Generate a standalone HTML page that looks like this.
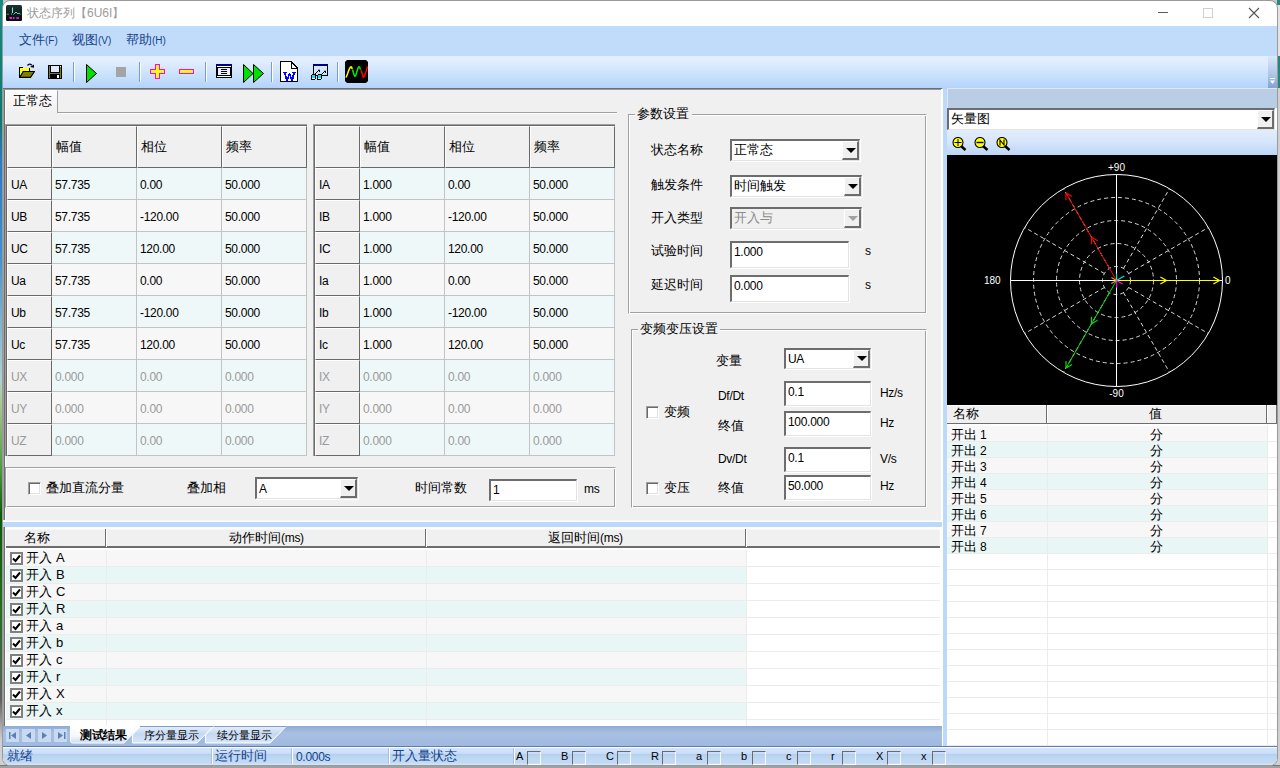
<!DOCTYPE html><html><head><meta charset="utf-8"><style>
*{margin:0;padding:0;box-sizing:border-box}
html,body{width:1280px;height:768px;overflow:hidden;background:#c8c8c8;font-family:"Liberation Sans",sans-serif;font-size:12px;color:#000}
.abs{position:absolute}
.t{position:absolute;white-space:nowrap;height:0;line-height:0}
.t>span,.tc{display:inline-block}
.cj{font-size:13px}
.num{font-size:12px;letter-spacing:-0.3px}
.sunk{position:absolute;background:#fff;border-top:2px solid #6d6d6d;border-left:2px solid #6d6d6d;border-right:1px solid #e3e3e3;border-bottom:1px solid #e3e3e3;box-shadow:1px 1px 0 #fff}
.btn{position:absolute;background:#f0f0f0;border-top:1px solid #fff;border-left:1px solid #fff;border-right:2px solid #6d6d6d;border-bottom:2px solid #6d6d6d}
.arr{position:absolute;width:0;height:0;border-left:5px solid transparent;border-right:5px solid transparent;border-top:5px solid #000}
.chk{position:absolute;width:13px;height:13px;background:#fff;border-top:1px solid #a0a0a0;border-left:1px solid #a0a0a0;border-right:1px solid #fff;border-bottom:1px solid #fff;box-shadow:inset 1px 1px 0 #696969, inset -1px -1px 0 #e3e3e3}
</style></head><body>
<div class="abs" style="left:0px;top:0px;width:3px;height:768px;background:linear-gradient(#1a8a80 0,#0a7a70 120px,#2a7ac8 160px,#3a90d0 250px,#b0d0d0 380px,#a8c890 404px,#4a9a40 470px,#0a5a0a 515px,#207020 611px,#606060 700px,#d0d0d0 740px)"></div>
<div class="abs" style="left:1277px;top:0px;width:3px;height:768px;background:linear-gradient(#2a8a80 0,#2a8a80 5px,#e4e4e4 5px,#e4e4e4 56px,#23877e 56px,#23877e 88px,#d0d0d0 88px,#d0d0d0 100%)"></div>
<div class="abs" style="left:0px;top:765px;width:1280px;height:3px;background:linear-gradient(#7a7a7a 0,#7a7a7a 1px,#a0a0a0 1px)"></div>
<div class="abs" style="left:2px;top:0px;width:1276px;height:766px;background:#fff;border-radius:8px;border:1px solid #9a9a9a"></div>
<svg class="abs" style="left:6px;top:5px" width="16" height="16" viewBox="0 0 16 16"><defs><linearGradient id="ig" x1="0" y1="0" x2="0" y2="1"><stop offset="0" stop-color="#1e3430"/><stop offset="1" stop-color="#020806"/></linearGradient></defs><rect x="0" y="0" width="16" height="16" rx="1.5" fill="url(#ig)"/><path d="M0.5 9.2 H3" stroke="#3a9a88" stroke-width="1"/><path d="M6.5 2.5 V8" stroke="#7ee8d8" stroke-width="1.1"/><path d="M5 9 h1 M7.5 9.5 L10 7 L12 9 L13 8 L14.5 9.2" stroke="#5ad0bc" stroke-width="1" fill="none"/><path d="M3 12 H6 V14 H4Z M7 12 H8.5 V14 H7Z M10 12.3 H13 V14 H10.5Z" fill="#ff10f0"/></svg>
<div class="t" style="left:27px;top:13px;"><span class="cj" style="font-size:12px;color:#9c9c9c">状态序列【6U6I】</span></div>
<div class="abs" style="left:1158px;top:12px;width:10px;height:1px;background:#5a5a5a"></div>
<div class="abs" style="left:1203px;top:8px;width:10px;height:10px;border:1px solid #d0d0d0"></div>
<svg class="abs" style="left:1248px;top:7px" width="12" height="12"><path d="M1 1 L11 11 M11 1 L1 11" stroke="#555" stroke-width="1.1"/></svg>
<div class="abs" style="left:3px;top:26px;width:1274px;height:30px;background:#c1dbfa"></div>
<div class="t" style="left:19px;top:40px;"><span class="cj" style="color:#15428b">文件</span><span style="font-size:10px;color:#15428b">(F)</span></div>
<div class="t" style="left:72px;top:40px;"><span class="cj" style="color:#15428b">视图</span><span style="font-size:10px;color:#15428b">(V)</span></div>
<div class="t" style="left:126px;top:40px;"><span class="cj" style="color:#15428b">帮助</span><span style="font-size:10px;color:#15428b">(H)</span></div>
<div class="abs" style="left:3px;top:56px;width:1274px;height:33px;background:linear-gradient(#e3eefd 0%,#e1edfd 18%,#c8e0fc 60%,#b2d2fc 100%)"></div>
<div class="abs" style="left:1268px;top:56px;width:9px;height:33px;background:linear-gradient(#dbe8f8,#a9c4e8 60%,#7d9fd4)"></div>
<svg class="abs" style="left:1269px;top:77px" width="8" height="8"><path d="M1 1.5 H6" stroke="#fff"/><path d="M1 3.5 L6 3.5 L3.5 7Z" fill="#fff"/></svg>
<div class="abs" style="left:3px;top:88px;width:939px;height:1px;background:#6d6d6d"></div>
<div class="abs" style="left:3px;top:89px;width:939px;height:1px;background:#9a9a9a"></div>
<div class="abs" style="left:73px;top:62px;width:1px;height:20px;background:#7a9cd0;box-shadow:1px 0 0 #fff"></div>
<div class="abs" style="left:139px;top:62px;width:1px;height:20px;background:#7a9cd0;box-shadow:1px 0 0 #fff"></div>
<div class="abs" style="left:205px;top:62px;width:1px;height:20px;background:#7a9cd0;box-shadow:1px 0 0 #fff"></div>
<div class="abs" style="left:271px;top:62px;width:1px;height:20px;background:#7a9cd0;box-shadow:1px 0 0 #fff"></div>
<div class="abs" style="left:337px;top:62px;width:1px;height:20px;background:#7a9cd0;box-shadow:1px 0 0 #fff"></div>
<svg class="abs" style="left:19px;top:63px" width="16" height="15" viewBox="0 0 16 15">
<path d="M0 4 H4 V5 H11 V8.5 H0Z" fill="#000"/>
<path d="M1 5 H10 V8 H4 L1 12Z" fill="#ffff20"/>
<path d="M0 4 H1 V15 H0Z" fill="#000"/>
<path d="M0.8 14.3 L4.2 8.5 H15.5 L11.5 14.3Z" fill="#808000" stroke="#000" stroke-width="1.2"/>
<path d="M8.5 2.5 Q10.5 0 12.8 2.2" stroke="#000" stroke-width="1.3" fill="none"/>
<path d="M11 4 L15 1.5 V4.8Z" fill="#000"/>
</svg>
<svg class="abs" style="left:48px;top:65px" width="14" height="14" viewBox="0 0 14 14" shape-rendering="crispEdges">
<rect x="0" y="0" width="14" height="14" fill="#000"/>
<rect x="1" y="1" width="1" height="12" fill="#808000"/>
<rect x="12" y="1" width="1" height="12" fill="#808000"/>
<rect x="1" y="8" width="12" height="1" fill="#808000"/>
<rect x="3" y="1" width="8" height="6" fill="#e0ebfc"/>
<rect x="9" y="10" width="2" height="3" fill="#fff"/>
<rect x="12" y="1" width="1" height="1" fill="#fff"/>
</svg>
<svg class="abs" style="left:86px;top:64px" width="11" height="19"><path d="M0.5 0.5 L10.5 9.5 L0.5 18.5 Z" fill="#00e000" stroke="#000"/></svg>
<div class="abs" style="left:116px;top:67px;width:10px;height:10px;background:#a4a4a4"></div>
<svg class="abs" style="left:150px;top:64px" width="15" height="15" shape-rendering="crispEdges"><path d="M5 0 H10 V5 H15 V10 H10 V15 H5 V10 H0 V5 H5 Z" fill="#ff00ff"/><path d="M6 1 H9 V6 H14 V9 H9 V14 H6 V9 H1 V6 H6 Z" fill="#ffff00"/></svg>
<div class="abs" style="left:179px;top:69px;width:15px;height:5px;background:#ffff00;border:1px solid #ff00ff"></div>
<svg class="abs" style="left:216px;top:64px" width="16" height="14" shape-rendering="crispEdges"><rect x="0" y="0" width="16" height="14" fill="#000"/><rect x="0" y="0" width="16" height="2" fill="#000080"/><rect x="1" y="2" width="14" height="1" fill="#fff"/><rect x="2" y="4" width="12" height="7" fill="#e6effc"/><rect x="1" y="12" width="14" height="1" fill="#fff"/><rect x="5" y="5" width="6" height="1" fill="#000"/><rect x="5" y="7" width="6" height="1" fill="#000"/><rect x="5" y="9" width="6" height="1" fill="#000"/></svg>
<svg class="abs" style="left:243px;top:64px" width="21" height="19"><path d="M0.5 0.5 L10 9.5 L0.5 18.5 Z M10.5 0.5 L20.5 9.5 L10.5 18.5 Z" fill="#00e000" stroke="#000"/></svg>
<svg class="abs" style="left:280px;top:61px" width="18" height="21" shape-rendering="crispEdges"><path d="M0.5 0.5 H11 L17.5 7 V20.5 H0.5 Z" fill="#fff" stroke="#000"/><path d="M11.5 0.5 V7.5 H17.5" fill="none" stroke="#000"/><path d="M3 11 H7 V12 H6 L7 17 L9 12 H10 L12 17 L13 12 H12 V11 H16 V12 H15 L13 20 H11 L9.5 15 L8 20 H6 L4 12 H3 Z" fill="#0000ff"/></svg>
<svg class="abs" style="left:310px;top:64px" width="18" height="16" shape-rendering="crispEdges"><rect x="3" y="0" width="15" height="2" fill="#000080"/><rect x="3" y="2" width="1" height="10" fill="#000"/><rect x="17" y="2" width="1" height="10" fill="#000"/><rect x="3" y="11" width="15" height="1" fill="#000"/><path d="M4 11 L9 6 M8.5 6 H9.5 V8 M11 11 L15 7 M14.5 7 H15.5 V9" stroke="#000" fill="none" shape-rendering="auto"/><rect x="1" y="10" width="5" height="6" rx="2" fill="#000"/><rect x="7" y="10" width="5" height="6" rx="2" fill="#000"/><rect x="5" y="11" width="3" height="1" fill="#000"/><rect x="2" y="11" width="3" height="3" fill="#00e8f0"/><rect x="8" y="11" width="3" height="3" fill="#00e8f0"/><rect x="2" y="14" width="3" height="1" fill="#fff"/><rect x="8" y="14" width="3" height="1" fill="#fff"/></svg>
<svg class="abs" style="left:345px;top:60px" width="23" height="23"><path d="M2 0 H21 L23 2 V21 L21 23 H2 L0 21 V2Z" fill="#000"/><path d="M1 17.5 L2.5 14 L3.5 11 L4.5 8.5 L5.5 7 L6.5 7 L7.2 9" stroke="#ffff00" stroke-width="1.5" fill="none"/><path d="M7.5 9.5 L8.5 13 L9.5 16 L10.5 16 L11.5 13 L12.5 9.5 L13.5 7 L14.5 7 L15.5 9.5" stroke="#00ee00" stroke-width="1.5" fill="none"/><path d="M16 10 L17.3 14 L18.3 17.3 L19.5 16 L20.5 13 L21.5 10 L22.5 6.5" stroke="#ff0000" stroke-width="1.5" fill="none"/></svg>
<div class="abs" style="left:3px;top:90px;width:939px;height:431px;background:#f0f0f0"></div>
<div class="abs" style="left:3px;top:90px;width:1px;height:431px;background:#a0a0a0"></div>
<div class="abs" style="left:4px;top:90px;width:1px;height:431px;background:#6d6d6d"></div>
<div class="abs" style="left:5px;top:90px;width:1px;height:431px;background:#fff"></div>
<div class="abs" style="left:5px;top:90px;width:53px;height:23px;background:linear-gradient(#fbfbfb,#f0f0f0);border-left:1px solid #fff;border-top:1px solid #fff;border-right:1px solid #a0a0a0"></div>
<div class="t" style="left:13px;top:101px;"><span class="cj">正常态</span></div>
<div class="abs" style="left:58px;top:112px;width:559px;height:1px;background:#a0a0a0"></div>
<div class="abs" style="left:58px;top:113px;width:559px;height:1px;background:#fff"></div>
<div class="abs" style="left:5px;top:124px;width:302px;height:1px;background:#a0a0a0"></div>
<div class="abs" style="left:5px;top:124px;width:1px;height:332px;background:#a0a0a0"></div>
<div class="abs" style="left:6px;top:125px;width:301px;height:1px;background:#696969"></div>
<div class="abs" style="left:6px;top:125px;width:1px;height:331px;background:#696969"></div>
<div class="abs" style="left:7px;top:126px;width:45px;height:42px;background:#f0f0f0;border-left:1px solid #fff;border-top:1px solid #fff;border-right:1px solid #696969;border-bottom:1px solid #696969"></div>
<div class="abs" style="left:52px;top:126px;width:85px;height:42px;background:#f0f0f0;border-left:1px solid #fff;border-top:1px solid #fff;border-right:1px solid #696969;border-bottom:1px solid #696969"></div>
<div class="abs" style="left:137px;top:126px;width:85px;height:42px;background:#f0f0f0;border-left:1px solid #fff;border-top:1px solid #fff;border-right:1px solid #696969;border-bottom:1px solid #696969"></div>
<div class="abs" style="left:222px;top:126px;width:85px;height:42px;background:#f0f0f0;border-left:1px solid #fff;border-top:1px solid #fff;border-right:1px solid #696969;border-bottom:1px solid #696969"></div>
<div class="t" style="left:56px;top:147px;"><span class="cj">幅值</span></div>
<div class="t" style="left:141px;top:147px;"><span class="cj">相位</span></div>
<div class="t" style="left:226px;top:147px;"><span class="cj">频率</span></div>
<div class="abs" style="left:7px;top:168px;width:45px;height:32px;background:#f0f0f0;border-left:1px solid #fff;border-top:1px solid #fff;border-right:1px solid #696969;border-bottom:1px solid #696969"></div>
<div class="abs" style="left:52px;top:168px;width:85px;height:32px;background:#eff8f8;border-right:1px solid #c3c3c3;border-bottom:1px solid #c3c3c3"></div>
<div class="abs" style="left:137px;top:168px;width:85px;height:32px;background:#eff8f8;border-right:1px solid #c3c3c3;border-bottom:1px solid #c3c3c3"></div>
<div class="abs" style="left:222px;top:168px;width:85px;height:32px;background:#eff8f8;border-right:1px solid #c3c3c3;border-bottom:1px solid #c3c3c3"></div>
<div class="t" style="left:11px;top:185px;"><span class="num" style="color:#000">UA</span></div>
<div class="t" style="left:55px;top:185px;"><span class="num" style="color:#000">57.735</span></div>
<div class="t" style="left:140px;top:185px;"><span class="num" style="color:#000">0.00</span></div>
<div class="t" style="left:225px;top:185px;"><span class="num" style="color:#000">50.000</span></div>
<div class="abs" style="left:7px;top:200px;width:45px;height:32px;background:#f0f0f0;border-left:1px solid #fff;border-top:1px solid #fff;border-right:1px solid #696969;border-bottom:1px solid #696969"></div>
<div class="abs" style="left:52px;top:200px;width:85px;height:32px;background:#f7f7f7;border-right:1px solid #c3c3c3;border-bottom:1px solid #c3c3c3"></div>
<div class="abs" style="left:137px;top:200px;width:85px;height:32px;background:#f7f7f7;border-right:1px solid #c3c3c3;border-bottom:1px solid #c3c3c3"></div>
<div class="abs" style="left:222px;top:200px;width:85px;height:32px;background:#f7f7f7;border-right:1px solid #c3c3c3;border-bottom:1px solid #c3c3c3"></div>
<div class="t" style="left:11px;top:217px;"><span class="num" style="color:#000">UB</span></div>
<div class="t" style="left:55px;top:217px;"><span class="num" style="color:#000">57.735</span></div>
<div class="t" style="left:140px;top:217px;"><span class="num" style="color:#000">-120.00</span></div>
<div class="t" style="left:225px;top:217px;"><span class="num" style="color:#000">50.000</span></div>
<div class="abs" style="left:7px;top:232px;width:45px;height:32px;background:#f0f0f0;border-left:1px solid #fff;border-top:1px solid #fff;border-right:1px solid #696969;border-bottom:1px solid #696969"></div>
<div class="abs" style="left:52px;top:232px;width:85px;height:32px;background:#eff8f8;border-right:1px solid #c3c3c3;border-bottom:1px solid #c3c3c3"></div>
<div class="abs" style="left:137px;top:232px;width:85px;height:32px;background:#eff8f8;border-right:1px solid #c3c3c3;border-bottom:1px solid #c3c3c3"></div>
<div class="abs" style="left:222px;top:232px;width:85px;height:32px;background:#eff8f8;border-right:1px solid #c3c3c3;border-bottom:1px solid #c3c3c3"></div>
<div class="t" style="left:11px;top:249px;"><span class="num" style="color:#000">UC</span></div>
<div class="t" style="left:55px;top:249px;"><span class="num" style="color:#000">57.735</span></div>
<div class="t" style="left:140px;top:249px;"><span class="num" style="color:#000">120.00</span></div>
<div class="t" style="left:225px;top:249px;"><span class="num" style="color:#000">50.000</span></div>
<div class="abs" style="left:7px;top:264px;width:45px;height:32px;background:#f0f0f0;border-left:1px solid #fff;border-top:1px solid #fff;border-right:1px solid #696969;border-bottom:1px solid #696969"></div>
<div class="abs" style="left:52px;top:264px;width:85px;height:32px;background:#f7f7f7;border-right:1px solid #c3c3c3;border-bottom:1px solid #c3c3c3"></div>
<div class="abs" style="left:137px;top:264px;width:85px;height:32px;background:#f7f7f7;border-right:1px solid #c3c3c3;border-bottom:1px solid #c3c3c3"></div>
<div class="abs" style="left:222px;top:264px;width:85px;height:32px;background:#f7f7f7;border-right:1px solid #c3c3c3;border-bottom:1px solid #c3c3c3"></div>
<div class="t" style="left:11px;top:281px;"><span class="num" style="color:#000">Ua</span></div>
<div class="t" style="left:55px;top:281px;"><span class="num" style="color:#000">57.735</span></div>
<div class="t" style="left:140px;top:281px;"><span class="num" style="color:#000">0.00</span></div>
<div class="t" style="left:225px;top:281px;"><span class="num" style="color:#000">50.000</span></div>
<div class="abs" style="left:7px;top:296px;width:45px;height:32px;background:#f0f0f0;border-left:1px solid #fff;border-top:1px solid #fff;border-right:1px solid #696969;border-bottom:1px solid #696969"></div>
<div class="abs" style="left:52px;top:296px;width:85px;height:32px;background:#eff8f8;border-right:1px solid #c3c3c3;border-bottom:1px solid #c3c3c3"></div>
<div class="abs" style="left:137px;top:296px;width:85px;height:32px;background:#eff8f8;border-right:1px solid #c3c3c3;border-bottom:1px solid #c3c3c3"></div>
<div class="abs" style="left:222px;top:296px;width:85px;height:32px;background:#eff8f8;border-right:1px solid #c3c3c3;border-bottom:1px solid #c3c3c3"></div>
<div class="t" style="left:11px;top:313px;"><span class="num" style="color:#000">Ub</span></div>
<div class="t" style="left:55px;top:313px;"><span class="num" style="color:#000">57.735</span></div>
<div class="t" style="left:140px;top:313px;"><span class="num" style="color:#000">-120.00</span></div>
<div class="t" style="left:225px;top:313px;"><span class="num" style="color:#000">50.000</span></div>
<div class="abs" style="left:7px;top:328px;width:45px;height:32px;background:#f0f0f0;border-left:1px solid #fff;border-top:1px solid #fff;border-right:1px solid #696969;border-bottom:1px solid #696969"></div>
<div class="abs" style="left:52px;top:328px;width:85px;height:32px;background:#f7f7f7;border-right:1px solid #c3c3c3;border-bottom:1px solid #c3c3c3"></div>
<div class="abs" style="left:137px;top:328px;width:85px;height:32px;background:#f7f7f7;border-right:1px solid #c3c3c3;border-bottom:1px solid #c3c3c3"></div>
<div class="abs" style="left:222px;top:328px;width:85px;height:32px;background:#f7f7f7;border-right:1px solid #c3c3c3;border-bottom:1px solid #c3c3c3"></div>
<div class="t" style="left:11px;top:345px;"><span class="num" style="color:#000">Uc</span></div>
<div class="t" style="left:55px;top:345px;"><span class="num" style="color:#000">57.735</span></div>
<div class="t" style="left:140px;top:345px;"><span class="num" style="color:#000">120.00</span></div>
<div class="t" style="left:225px;top:345px;"><span class="num" style="color:#000">50.000</span></div>
<div class="abs" style="left:7px;top:360px;width:45px;height:32px;background:#f0f0f0;border-left:1px solid #fff;border-top:1px solid #fff;border-right:1px solid #696969;border-bottom:1px solid #696969"></div>
<div class="abs" style="left:52px;top:360px;width:85px;height:32px;background:#eff8f8;border-right:1px solid #c3c3c3;border-bottom:1px solid #c3c3c3"></div>
<div class="abs" style="left:137px;top:360px;width:85px;height:32px;background:#eff8f8;border-right:1px solid #c3c3c3;border-bottom:1px solid #c3c3c3"></div>
<div class="abs" style="left:222px;top:360px;width:85px;height:32px;background:#eff8f8;border-right:1px solid #c3c3c3;border-bottom:1px solid #c3c3c3"></div>
<div class="t" style="left:11px;top:377px;"><span class="num" style="color:#9a9a9a">UX</span></div>
<div class="t" style="left:55px;top:377px;"><span class="num" style="color:#9a9a9a">0.000</span></div>
<div class="t" style="left:140px;top:377px;"><span class="num" style="color:#9a9a9a">0.00</span></div>
<div class="t" style="left:225px;top:377px;"><span class="num" style="color:#9a9a9a">0.000</span></div>
<div class="abs" style="left:7px;top:392px;width:45px;height:32px;background:#f0f0f0;border-left:1px solid #fff;border-top:1px solid #fff;border-right:1px solid #696969;border-bottom:1px solid #696969"></div>
<div class="abs" style="left:52px;top:392px;width:85px;height:32px;background:#f7f7f7;border-right:1px solid #c3c3c3;border-bottom:1px solid #c3c3c3"></div>
<div class="abs" style="left:137px;top:392px;width:85px;height:32px;background:#f7f7f7;border-right:1px solid #c3c3c3;border-bottom:1px solid #c3c3c3"></div>
<div class="abs" style="left:222px;top:392px;width:85px;height:32px;background:#f7f7f7;border-right:1px solid #c3c3c3;border-bottom:1px solid #c3c3c3"></div>
<div class="t" style="left:11px;top:409px;"><span class="num" style="color:#9a9a9a">UY</span></div>
<div class="t" style="left:55px;top:409px;"><span class="num" style="color:#9a9a9a">0.000</span></div>
<div class="t" style="left:140px;top:409px;"><span class="num" style="color:#9a9a9a">0.00</span></div>
<div class="t" style="left:225px;top:409px;"><span class="num" style="color:#9a9a9a">0.000</span></div>
<div class="abs" style="left:7px;top:424px;width:45px;height:32px;background:#f0f0f0;border-left:1px solid #fff;border-top:1px solid #fff;border-right:1px solid #696969;border-bottom:1px solid #696969"></div>
<div class="abs" style="left:52px;top:424px;width:85px;height:32px;background:#eff8f8;border-right:1px solid #c3c3c3;border-bottom:1px solid #c3c3c3"></div>
<div class="abs" style="left:137px;top:424px;width:85px;height:32px;background:#eff8f8;border-right:1px solid #c3c3c3;border-bottom:1px solid #c3c3c3"></div>
<div class="abs" style="left:222px;top:424px;width:85px;height:32px;background:#eff8f8;border-right:1px solid #c3c3c3;border-bottom:1px solid #c3c3c3"></div>
<div class="t" style="left:11px;top:441px;"><span class="num" style="color:#9a9a9a">UZ</span></div>
<div class="t" style="left:55px;top:441px;"><span class="num" style="color:#9a9a9a">0.000</span></div>
<div class="t" style="left:140px;top:441px;"><span class="num" style="color:#9a9a9a">0.00</span></div>
<div class="t" style="left:225px;top:441px;"><span class="num" style="color:#9a9a9a">0.000</span></div>
<div class="abs" style="left:313px;top:124px;width:302px;height:1px;background:#a0a0a0"></div>
<div class="abs" style="left:313px;top:124px;width:1px;height:332px;background:#a0a0a0"></div>
<div class="abs" style="left:314px;top:125px;width:301px;height:1px;background:#696969"></div>
<div class="abs" style="left:314px;top:125px;width:1px;height:331px;background:#696969"></div>
<div class="abs" style="left:315px;top:126px;width:45px;height:42px;background:#f0f0f0;border-left:1px solid #fff;border-top:1px solid #fff;border-right:1px solid #696969;border-bottom:1px solid #696969"></div>
<div class="abs" style="left:360px;top:126px;width:85px;height:42px;background:#f0f0f0;border-left:1px solid #fff;border-top:1px solid #fff;border-right:1px solid #696969;border-bottom:1px solid #696969"></div>
<div class="abs" style="left:445px;top:126px;width:85px;height:42px;background:#f0f0f0;border-left:1px solid #fff;border-top:1px solid #fff;border-right:1px solid #696969;border-bottom:1px solid #696969"></div>
<div class="abs" style="left:530px;top:126px;width:85px;height:42px;background:#f0f0f0;border-left:1px solid #fff;border-top:1px solid #fff;border-right:1px solid #696969;border-bottom:1px solid #696969"></div>
<div class="t" style="left:364px;top:147px;"><span class="cj">幅值</span></div>
<div class="t" style="left:449px;top:147px;"><span class="cj">相位</span></div>
<div class="t" style="left:534px;top:147px;"><span class="cj">频率</span></div>
<div class="abs" style="left:315px;top:168px;width:45px;height:32px;background:#f0f0f0;border-left:1px solid #fff;border-top:1px solid #fff;border-right:1px solid #696969;border-bottom:1px solid #696969"></div>
<div class="abs" style="left:360px;top:168px;width:85px;height:32px;background:#eff8f8;border-right:1px solid #c3c3c3;border-bottom:1px solid #c3c3c3"></div>
<div class="abs" style="left:445px;top:168px;width:85px;height:32px;background:#eff8f8;border-right:1px solid #c3c3c3;border-bottom:1px solid #c3c3c3"></div>
<div class="abs" style="left:530px;top:168px;width:85px;height:32px;background:#eff8f8;border-right:1px solid #c3c3c3;border-bottom:1px solid #c3c3c3"></div>
<div class="t" style="left:319px;top:185px;"><span class="num" style="color:#000">IA</span></div>
<div class="t" style="left:363px;top:185px;"><span class="num" style="color:#000">1.000</span></div>
<div class="t" style="left:448px;top:185px;"><span class="num" style="color:#000">0.00</span></div>
<div class="t" style="left:533px;top:185px;"><span class="num" style="color:#000">50.000</span></div>
<div class="abs" style="left:315px;top:200px;width:45px;height:32px;background:#f0f0f0;border-left:1px solid #fff;border-top:1px solid #fff;border-right:1px solid #696969;border-bottom:1px solid #696969"></div>
<div class="abs" style="left:360px;top:200px;width:85px;height:32px;background:#f7f7f7;border-right:1px solid #c3c3c3;border-bottom:1px solid #c3c3c3"></div>
<div class="abs" style="left:445px;top:200px;width:85px;height:32px;background:#f7f7f7;border-right:1px solid #c3c3c3;border-bottom:1px solid #c3c3c3"></div>
<div class="abs" style="left:530px;top:200px;width:85px;height:32px;background:#f7f7f7;border-right:1px solid #c3c3c3;border-bottom:1px solid #c3c3c3"></div>
<div class="t" style="left:319px;top:217px;"><span class="num" style="color:#000">IB</span></div>
<div class="t" style="left:363px;top:217px;"><span class="num" style="color:#000">1.000</span></div>
<div class="t" style="left:448px;top:217px;"><span class="num" style="color:#000">-120.00</span></div>
<div class="t" style="left:533px;top:217px;"><span class="num" style="color:#000">50.000</span></div>
<div class="abs" style="left:315px;top:232px;width:45px;height:32px;background:#f0f0f0;border-left:1px solid #fff;border-top:1px solid #fff;border-right:1px solid #696969;border-bottom:1px solid #696969"></div>
<div class="abs" style="left:360px;top:232px;width:85px;height:32px;background:#eff8f8;border-right:1px solid #c3c3c3;border-bottom:1px solid #c3c3c3"></div>
<div class="abs" style="left:445px;top:232px;width:85px;height:32px;background:#eff8f8;border-right:1px solid #c3c3c3;border-bottom:1px solid #c3c3c3"></div>
<div class="abs" style="left:530px;top:232px;width:85px;height:32px;background:#eff8f8;border-right:1px solid #c3c3c3;border-bottom:1px solid #c3c3c3"></div>
<div class="t" style="left:319px;top:249px;"><span class="num" style="color:#000">IC</span></div>
<div class="t" style="left:363px;top:249px;"><span class="num" style="color:#000">1.000</span></div>
<div class="t" style="left:448px;top:249px;"><span class="num" style="color:#000">120.00</span></div>
<div class="t" style="left:533px;top:249px;"><span class="num" style="color:#000">50.000</span></div>
<div class="abs" style="left:315px;top:264px;width:45px;height:32px;background:#f0f0f0;border-left:1px solid #fff;border-top:1px solid #fff;border-right:1px solid #696969;border-bottom:1px solid #696969"></div>
<div class="abs" style="left:360px;top:264px;width:85px;height:32px;background:#f7f7f7;border-right:1px solid #c3c3c3;border-bottom:1px solid #c3c3c3"></div>
<div class="abs" style="left:445px;top:264px;width:85px;height:32px;background:#f7f7f7;border-right:1px solid #c3c3c3;border-bottom:1px solid #c3c3c3"></div>
<div class="abs" style="left:530px;top:264px;width:85px;height:32px;background:#f7f7f7;border-right:1px solid #c3c3c3;border-bottom:1px solid #c3c3c3"></div>
<div class="t" style="left:319px;top:281px;"><span class="num" style="color:#000">Ia</span></div>
<div class="t" style="left:363px;top:281px;"><span class="num" style="color:#000">1.000</span></div>
<div class="t" style="left:448px;top:281px;"><span class="num" style="color:#000">0.00</span></div>
<div class="t" style="left:533px;top:281px;"><span class="num" style="color:#000">50.000</span></div>
<div class="abs" style="left:315px;top:296px;width:45px;height:32px;background:#f0f0f0;border-left:1px solid #fff;border-top:1px solid #fff;border-right:1px solid #696969;border-bottom:1px solid #696969"></div>
<div class="abs" style="left:360px;top:296px;width:85px;height:32px;background:#eff8f8;border-right:1px solid #c3c3c3;border-bottom:1px solid #c3c3c3"></div>
<div class="abs" style="left:445px;top:296px;width:85px;height:32px;background:#eff8f8;border-right:1px solid #c3c3c3;border-bottom:1px solid #c3c3c3"></div>
<div class="abs" style="left:530px;top:296px;width:85px;height:32px;background:#eff8f8;border-right:1px solid #c3c3c3;border-bottom:1px solid #c3c3c3"></div>
<div class="t" style="left:319px;top:313px;"><span class="num" style="color:#000">Ib</span></div>
<div class="t" style="left:363px;top:313px;"><span class="num" style="color:#000">1.000</span></div>
<div class="t" style="left:448px;top:313px;"><span class="num" style="color:#000">-120.00</span></div>
<div class="t" style="left:533px;top:313px;"><span class="num" style="color:#000">50.000</span></div>
<div class="abs" style="left:315px;top:328px;width:45px;height:32px;background:#f0f0f0;border-left:1px solid #fff;border-top:1px solid #fff;border-right:1px solid #696969;border-bottom:1px solid #696969"></div>
<div class="abs" style="left:360px;top:328px;width:85px;height:32px;background:#f7f7f7;border-right:1px solid #c3c3c3;border-bottom:1px solid #c3c3c3"></div>
<div class="abs" style="left:445px;top:328px;width:85px;height:32px;background:#f7f7f7;border-right:1px solid #c3c3c3;border-bottom:1px solid #c3c3c3"></div>
<div class="abs" style="left:530px;top:328px;width:85px;height:32px;background:#f7f7f7;border-right:1px solid #c3c3c3;border-bottom:1px solid #c3c3c3"></div>
<div class="t" style="left:319px;top:345px;"><span class="num" style="color:#000">Ic</span></div>
<div class="t" style="left:363px;top:345px;"><span class="num" style="color:#000">1.000</span></div>
<div class="t" style="left:448px;top:345px;"><span class="num" style="color:#000">120.00</span></div>
<div class="t" style="left:533px;top:345px;"><span class="num" style="color:#000">50.000</span></div>
<div class="abs" style="left:315px;top:360px;width:45px;height:32px;background:#f0f0f0;border-left:1px solid #fff;border-top:1px solid #fff;border-right:1px solid #696969;border-bottom:1px solid #696969"></div>
<div class="abs" style="left:360px;top:360px;width:85px;height:32px;background:#eff8f8;border-right:1px solid #c3c3c3;border-bottom:1px solid #c3c3c3"></div>
<div class="abs" style="left:445px;top:360px;width:85px;height:32px;background:#eff8f8;border-right:1px solid #c3c3c3;border-bottom:1px solid #c3c3c3"></div>
<div class="abs" style="left:530px;top:360px;width:85px;height:32px;background:#eff8f8;border-right:1px solid #c3c3c3;border-bottom:1px solid #c3c3c3"></div>
<div class="t" style="left:319px;top:377px;"><span class="num" style="color:#9a9a9a">IX</span></div>
<div class="t" style="left:363px;top:377px;"><span class="num" style="color:#9a9a9a">0.000</span></div>
<div class="t" style="left:448px;top:377px;"><span class="num" style="color:#9a9a9a">0.00</span></div>
<div class="t" style="left:533px;top:377px;"><span class="num" style="color:#9a9a9a">0.000</span></div>
<div class="abs" style="left:315px;top:392px;width:45px;height:32px;background:#f0f0f0;border-left:1px solid #fff;border-top:1px solid #fff;border-right:1px solid #696969;border-bottom:1px solid #696969"></div>
<div class="abs" style="left:360px;top:392px;width:85px;height:32px;background:#f7f7f7;border-right:1px solid #c3c3c3;border-bottom:1px solid #c3c3c3"></div>
<div class="abs" style="left:445px;top:392px;width:85px;height:32px;background:#f7f7f7;border-right:1px solid #c3c3c3;border-bottom:1px solid #c3c3c3"></div>
<div class="abs" style="left:530px;top:392px;width:85px;height:32px;background:#f7f7f7;border-right:1px solid #c3c3c3;border-bottom:1px solid #c3c3c3"></div>
<div class="t" style="left:319px;top:409px;"><span class="num" style="color:#9a9a9a">IY</span></div>
<div class="t" style="left:363px;top:409px;"><span class="num" style="color:#9a9a9a">0.000</span></div>
<div class="t" style="left:448px;top:409px;"><span class="num" style="color:#9a9a9a">0.00</span></div>
<div class="t" style="left:533px;top:409px;"><span class="num" style="color:#9a9a9a">0.000</span></div>
<div class="abs" style="left:315px;top:424px;width:45px;height:32px;background:#f0f0f0;border-left:1px solid #fff;border-top:1px solid #fff;border-right:1px solid #696969;border-bottom:1px solid #696969"></div>
<div class="abs" style="left:360px;top:424px;width:85px;height:32px;background:#eff8f8;border-right:1px solid #c3c3c3;border-bottom:1px solid #c3c3c3"></div>
<div class="abs" style="left:445px;top:424px;width:85px;height:32px;background:#eff8f8;border-right:1px solid #c3c3c3;border-bottom:1px solid #c3c3c3"></div>
<div class="abs" style="left:530px;top:424px;width:85px;height:32px;background:#eff8f8;border-right:1px solid #c3c3c3;border-bottom:1px solid #c3c3c3"></div>
<div class="t" style="left:319px;top:441px;"><span class="num" style="color:#9a9a9a">IZ</span></div>
<div class="t" style="left:363px;top:441px;"><span class="num" style="color:#9a9a9a">0.000</span></div>
<div class="t" style="left:448px;top:441px;"><span class="num" style="color:#9a9a9a">0.00</span></div>
<div class="t" style="left:533px;top:441px;"><span class="num" style="color:#9a9a9a">0.000</span></div>
<div class="abs" style="left:5px;top:467px;width:611px;height:41px;border-top:1px solid #a0a0a0;border-left:1px solid #a0a0a0;border-right:1px solid #fff;border-bottom:1px solid #fff;box-shadow:inset 1px 1px 0 #fff, inset -1px -1px 0 #a0a0a0"></div>
<div class="chk" style="left:28px;top:482px"></div>
<div class="t" style="left:46px;top:488px;"><span class="cj">叠加直流分量</span></div>
<div class="t" style="left:187px;top:488px;"><span class="cj">叠加相</span></div>
<div class="sunk" style="left:255px;top:477px;width:103px;height:22px;background:#fff"></div>
<div class="btn" style="left:340px;top:479px;width:17px;height:19px"></div>
<div class="arr" style="left:344px;top:486px;border-top-color:#000"></div>
<div class="t" style="left:259px;top:489px;"><span class="num">A</span></div>
<div class="t" style="left:415px;top:488px;"><span class="cj">时间常数</span></div>
<div class="sunk" style="left:489px;top:479px;width:88px;height:22px"></div>
<div class="t" style="left:493px;top:490px;"><span class="num">1</span></div>
<div class="t" style="left:584px;top:489px;"><span class="num">ms</span></div>
<div class="abs" style="left:628px;top:114px;width:299px;height:200px;border-top:1px solid #a0a0a0;border-left:1px solid #a0a0a0;border-right:1px solid #fff;border-bottom:1px solid #fff;box-shadow:inset 1px 1px 0 #fff, inset -1px -1px 0 #a0a0a0"></div>
<div class="abs" style="left:635px;top:108px;width:57px;height:12px;background:#f0f0f0"></div>
<div class="t" style="left:637px;top:114px;"><span class="cj">参数设置</span></div>
<div class="t" style="left:651px;top:150px;"><span class="cj">状态名称</span></div>
<div class="sunk" style="left:730px;top:139px;width:130px;height:22px;background:#fff"></div>
<div class="btn" style="left:842px;top:141px;width:17px;height:19px"></div>
<div class="arr" style="left:846px;top:148px;border-top-color:#000"></div>
<div class="t" style="left:734px;top:150px;"><span class="cj" style="color:#000">正常态</span></div>
<div class="t" style="left:651px;top:185px;"><span class="cj">触发条件</span></div>
<div class="sunk" style="left:730px;top:175px;width:132px;height:22px;background:#fff"></div>
<div class="btn" style="left:844px;top:177px;width:17px;height:19px"></div>
<div class="arr" style="left:848px;top:184px;border-top-color:#000"></div>
<div class="t" style="left:734px;top:186px;"><span class="cj" style="color:#000">时间触发</span></div>
<div class="t" style="left:651px;top:218px;"><span class="cj">开入类型</span></div>
<div class="sunk" style="left:730px;top:207px;width:132px;height:22px;background:#f0f0f0"></div>
<div class="btn" style="left:844px;top:209px;width:17px;height:19px"></div>
<div class="arr" style="left:848px;top:216px;border-top-color:#a0a0a0"></div>
<div class="t" style="left:734px;top:218px;"><span class="cj" style="color:#8c8c8c">开入与</span></div>
<div class="t" style="left:651px;top:251px;"><span class="cj">试验时间</span></div>
<div class="sunk" style="left:730px;top:241px;width:119px;height:27px"></div>
<div class="t" style="left:734px;top:252px;"><span class="num">1.000</span></div>
<div class="t" style="left:865px;top:251px;"><span class="num">s</span></div>
<div class="t" style="left:651px;top:285px;"><span class="cj">延迟时间</span></div>
<div class="sunk" style="left:730px;top:275px;width:119px;height:27px"></div>
<div class="t" style="left:734px;top:286px;"><span class="num">0.000</span></div>
<div class="t" style="left:865px;top:285px;"><span class="num">s</span></div>
<div class="abs" style="left:631px;top:329px;width:296px;height:179px;border-top:1px solid #a0a0a0;border-left:1px solid #a0a0a0;border-right:1px solid #fff;border-bottom:1px solid #fff;box-shadow:inset 1px 1px 0 #fff, inset -1px -1px 0 #a0a0a0"></div>
<div class="abs" style="left:638px;top:323px;width:82px;height:12px;background:#f0f0f0"></div>
<div class="t" style="left:640px;top:329px;"><span class="cj">变频变压设置</span></div>
<div class="t" style="left:716px;top:361px;"><span class="cj">变量</span></div>
<div class="sunk" style="left:784px;top:348px;width:87px;height:21px;background:#fff"></div>
<div class="btn" style="left:853px;top:350px;width:17px;height:18px"></div>
<div class="arr" style="left:857px;top:356px;border-top-color:#000"></div>
<div class="t" style="left:788px;top:359px;"><span class="num">UA</span></div>
<div class="t" style="left:718px;top:396px;"><span class="num">Df/Dt</span></div>
<div class="sunk" style="left:784px;top:381px;width:87px;height:25px"></div>
<div class="t" style="left:788px;top:392px;"><span class="num">0.1</span></div>
<div class="t" style="left:880px;top:393px;"><span class="num">Hz/s</span></div>
<div class="chk" style="left:646px;top:406px"></div>
<div class="t" style="left:664px;top:412px;"><span class="cj">变频</span></div>
<div class="t" style="left:718px;top:426px;"><span class="cj">终值</span></div>
<div class="sunk" style="left:784px;top:411px;width:87px;height:25px"></div>
<div class="t" style="left:788px;top:422px;"><span class="num">100.000</span></div>
<div class="t" style="left:880px;top:423px;"><span class="num">Hz</span></div>
<div class="t" style="left:718px;top:459px;"><span class="num">Dv/Dt</span></div>
<div class="sunk" style="left:784px;top:447px;width:87px;height:25px"></div>
<div class="t" style="left:788px;top:458px;"><span class="num">0.1</span></div>
<div class="t" style="left:880px;top:459px;"><span class="num">V/s</span></div>
<div class="chk" style="left:646px;top:482px"></div>
<div class="t" style="left:664px;top:488px;"><span class="cj">变压</span></div>
<div class="t" style="left:718px;top:488px;"><span class="cj">终值</span></div>
<div class="sunk" style="left:784px;top:475px;width:87px;height:25px"></div>
<div class="t" style="left:788px;top:486px;"><span class="num">50.000</span></div>
<div class="t" style="left:880px;top:486px;"><span class="num">Hz</span></div>
<div class="abs" style="left:941px;top:89px;width:1px;height:432px;background:#fff"></div>
<div class="abs" style="left:3px;top:520px;width:939px;height:1px;background:#f8f8f8"></div>
<div class="abs" style="left:3px;top:521px;width:939px;height:1px;background:#fff"></div>
<div class="abs" style="left:3px;top:522px;width:939px;height:5px;background:#bdd9fa"></div>
<div class="abs" style="left:3px;top:527px;width:939px;height:199px;background:#fff"></div>
<div class="abs" style="left:3px;top:527px;width:1px;height:200px;background:#a0a0a0"></div>
<div class="abs" style="left:4px;top:527px;width:1px;height:200px;background:#6d6d6d"></div>
<div class="abs" style="left:6px;top:529px;width:934px;height:19px;background:#f0f0f0;border-bottom:2px solid #6d6d6d;border-top:1px solid #f8f8f8"></div>
<div class="abs" style="left:105px;top:529px;width:1px;height:18px;background:#6d6d6d"></div>
<div class="abs" style="left:106px;top:529px;width:1px;height:18px;background:#fff"></div>
<div class="abs" style="left:425px;top:529px;width:1px;height:18px;background:#6d6d6d"></div>
<div class="abs" style="left:426px;top:529px;width:1px;height:18px;background:#fff"></div>
<div class="abs" style="left:745px;top:529px;width:1px;height:18px;background:#6d6d6d"></div>
<div class="abs" style="left:746px;top:529px;width:1px;height:18px;background:#fff"></div>
<div class="t" style="left:24px;top:538px;"><span class="cj">名称</span></div>
<div class="t" style="left:229px;top:538px;"><span class="cj">动作时间</span><span class="num">(ms)</span></div>
<div class="t" style="left:548px;top:538px;"><span class="cj">返回时间</span><span class="num">(ms)</span></div>
<div class="abs" style="left:6px;top:550px;width:740px;height:17px;background:#f7f7f7;border-bottom:1px solid #ececec"></div>
<div class="abs" style="left:746px;top:550px;width:194px;height:17px;background:#fff;border-bottom:1px solid #ececec"></div>
<div class="abs" style="left:10px;top:552px;width:13px;height:13px;background:#fff;border:2px solid #808080"></div>
<svg class="abs" style="left:12px;top:554px" width="9" height="9"><path d="M1 4.5 L3.5 7 L8 1.5" stroke="#000" stroke-width="2" fill="none"/></svg>
<div class="t" style="left:26px;top:558px;"><span class="cj">开入</span><span class="num" style="font-size:13px;margin-left:4px">A</span></div>
<div class="abs" style="left:6px;top:567px;width:740px;height:17px;background:#e9f6f6;border-bottom:1px solid #ececec"></div>
<div class="abs" style="left:746px;top:567px;width:194px;height:17px;background:#fff;border-bottom:1px solid #ececec"></div>
<div class="abs" style="left:10px;top:569px;width:13px;height:13px;background:#fff;border:2px solid #808080"></div>
<svg class="abs" style="left:12px;top:571px" width="9" height="9"><path d="M1 4.5 L3.5 7 L8 1.5" stroke="#000" stroke-width="2" fill="none"/></svg>
<div class="t" style="left:26px;top:575px;"><span class="cj">开入</span><span class="num" style="font-size:13px;margin-left:4px">B</span></div>
<div class="abs" style="left:6px;top:584px;width:740px;height:17px;background:#f7f7f7;border-bottom:1px solid #ececec"></div>
<div class="abs" style="left:746px;top:584px;width:194px;height:17px;background:#fff;border-bottom:1px solid #ececec"></div>
<div class="abs" style="left:10px;top:586px;width:13px;height:13px;background:#fff;border:2px solid #808080"></div>
<svg class="abs" style="left:12px;top:588px" width="9" height="9"><path d="M1 4.5 L3.5 7 L8 1.5" stroke="#000" stroke-width="2" fill="none"/></svg>
<div class="t" style="left:26px;top:592px;"><span class="cj">开入</span><span class="num" style="font-size:13px;margin-left:4px">C</span></div>
<div class="abs" style="left:6px;top:601px;width:740px;height:17px;background:#e9f6f6;border-bottom:1px solid #ececec"></div>
<div class="abs" style="left:746px;top:601px;width:194px;height:17px;background:#fff;border-bottom:1px solid #ececec"></div>
<div class="abs" style="left:10px;top:603px;width:13px;height:13px;background:#fff;border:2px solid #808080"></div>
<svg class="abs" style="left:12px;top:605px" width="9" height="9"><path d="M1 4.5 L3.5 7 L8 1.5" stroke="#000" stroke-width="2" fill="none"/></svg>
<div class="t" style="left:26px;top:609px;"><span class="cj">开入</span><span class="num" style="font-size:13px;margin-left:4px">R</span></div>
<div class="abs" style="left:6px;top:618px;width:740px;height:17px;background:#f7f7f7;border-bottom:1px solid #ececec"></div>
<div class="abs" style="left:746px;top:618px;width:194px;height:17px;background:#fff;border-bottom:1px solid #ececec"></div>
<div class="abs" style="left:10px;top:620px;width:13px;height:13px;background:#fff;border:2px solid #808080"></div>
<svg class="abs" style="left:12px;top:622px" width="9" height="9"><path d="M1 4.5 L3.5 7 L8 1.5" stroke="#000" stroke-width="2" fill="none"/></svg>
<div class="t" style="left:26px;top:626px;"><span class="cj">开入</span><span class="num" style="font-size:13px;margin-left:4px">a</span></div>
<div class="abs" style="left:6px;top:635px;width:740px;height:17px;background:#e9f6f6;border-bottom:1px solid #ececec"></div>
<div class="abs" style="left:746px;top:635px;width:194px;height:17px;background:#fff;border-bottom:1px solid #ececec"></div>
<div class="abs" style="left:10px;top:637px;width:13px;height:13px;background:#fff;border:2px solid #808080"></div>
<svg class="abs" style="left:12px;top:639px" width="9" height="9"><path d="M1 4.5 L3.5 7 L8 1.5" stroke="#000" stroke-width="2" fill="none"/></svg>
<div class="t" style="left:26px;top:643px;"><span class="cj">开入</span><span class="num" style="font-size:13px;margin-left:4px">b</span></div>
<div class="abs" style="left:6px;top:652px;width:740px;height:17px;background:#f7f7f7;border-bottom:1px solid #ececec"></div>
<div class="abs" style="left:746px;top:652px;width:194px;height:17px;background:#fff;border-bottom:1px solid #ececec"></div>
<div class="abs" style="left:10px;top:654px;width:13px;height:13px;background:#fff;border:2px solid #808080"></div>
<svg class="abs" style="left:12px;top:656px" width="9" height="9"><path d="M1 4.5 L3.5 7 L8 1.5" stroke="#000" stroke-width="2" fill="none"/></svg>
<div class="t" style="left:26px;top:660px;"><span class="cj">开入</span><span class="num" style="font-size:13px;margin-left:4px">c</span></div>
<div class="abs" style="left:6px;top:669px;width:740px;height:17px;background:#e9f6f6;border-bottom:1px solid #ececec"></div>
<div class="abs" style="left:746px;top:669px;width:194px;height:17px;background:#fff;border-bottom:1px solid #ececec"></div>
<div class="abs" style="left:10px;top:671px;width:13px;height:13px;background:#fff;border:2px solid #808080"></div>
<svg class="abs" style="left:12px;top:673px" width="9" height="9"><path d="M1 4.5 L3.5 7 L8 1.5" stroke="#000" stroke-width="2" fill="none"/></svg>
<div class="t" style="left:26px;top:677px;"><span class="cj">开入</span><span class="num" style="font-size:13px;margin-left:4px">r</span></div>
<div class="abs" style="left:6px;top:686px;width:740px;height:17px;background:#f7f7f7;border-bottom:1px solid #ececec"></div>
<div class="abs" style="left:746px;top:686px;width:194px;height:17px;background:#fff;border-bottom:1px solid #ececec"></div>
<div class="abs" style="left:10px;top:688px;width:13px;height:13px;background:#fff;border:2px solid #808080"></div>
<svg class="abs" style="left:12px;top:690px" width="9" height="9"><path d="M1 4.5 L3.5 7 L8 1.5" stroke="#000" stroke-width="2" fill="none"/></svg>
<div class="t" style="left:26px;top:694px;"><span class="cj">开入</span><span class="num" style="font-size:13px;margin-left:4px">X</span></div>
<div class="abs" style="left:6px;top:703px;width:740px;height:17px;background:#e9f6f6;border-bottom:1px solid #ececec"></div>
<div class="abs" style="left:746px;top:703px;width:194px;height:17px;background:#fff;border-bottom:1px solid #ececec"></div>
<div class="abs" style="left:10px;top:705px;width:13px;height:13px;background:#fff;border:2px solid #808080"></div>
<svg class="abs" style="left:12px;top:707px" width="9" height="9"><path d="M1 4.5 L3.5 7 L8 1.5" stroke="#000" stroke-width="2" fill="none"/></svg>
<div class="t" style="left:26px;top:711px;"><span class="cj">开入</span><span class="num" style="font-size:13px;margin-left:4px">x</span></div>
<div class="abs" style="left:106px;top:550px;width:1px;height:176px;background:#ececec"></div>
<div class="abs" style="left:426px;top:550px;width:1px;height:176px;background:#ececec"></div>
<div class="abs" style="left:746px;top:550px;width:1px;height:176px;background:#ececec"></div>
<div class="abs" style="left:3px;top:726px;width:939px;height:20px;background:linear-gradient(#8eacd6 0,#a7c0e2 35%,#a0b9de 100%)"></div>
<div class="abs" style="left:6px;top:729px;width:13px;height:13px;background:#c9daf0"></div>
<div class="abs" style="left:22px;top:729px;width:13px;height:13px;background:#c9daf0"></div>
<div class="abs" style="left:38px;top:729px;width:13px;height:13px;background:#c9daf0"></div>
<div class="abs" style="left:54px;top:729px;width:13px;height:13px;background:#c9daf0"></div>
<svg class="abs" style="left:6px;top:729px" width="64" height="13"><g fill="#5b80b8"><rect x="3" y="3" width="1.5" height="7"/><path d="M10 3 L5 6.5 L10 10Z"/><path d="M25 3 L20 6.5 L25 10Z"/><path d="M36 3 L41 6.5 L36 10Z"/><path d="M52 3 L57 6.5 L52 10Z"/><rect x="58" y="3" width="1.5" height="7"/></g></svg>
<svg class="abs" style="left:0px;top:720px" width="300" height="28"><defs><linearGradient id="tg" x1="0" y1="0" x2="0" y2="1"><stop offset="0" stop-color="#fff"/><stop offset="0.6" stop-color="#f4f8fd"/><stop offset="1" stop-color="#c8daf2"/></linearGradient><linearGradient id="tg2" x1="0" y1="0" x2="0" y2="1"><stop offset="0" stop-color="#e6effa"/><stop offset="0.45" stop-color="#c4d8f2"/><stop offset="1" stop-color="#d8e6f8"/></linearGradient></defs><path d="M205.5 23 V15 L213.5 6.5 H286 L270 23Z" fill="url(#tg2)" stroke="#fff"/><path d="M213.5 6.5 H286" stroke="#7f9ecb"/><path d="M132.5 23 V15 L140 6.5 H213 L197 23Z" fill="url(#tg2)" stroke="#fff"/><path d="M140 6.5 H213" stroke="#7f9ecb"/><path d="M70.5 6 V21 Q70.5 23 73 23 H124 L140 6Z" fill="url(#tg)" stroke="#fff"/></svg>
<div class="t" style="left:80px;top:735px;"><span class="cj" style="font-weight:bold;font-size:12px;letter-spacing:-0.3px">测试结果</span></div>
<div class="t" style="left:144px;top:735px;"><span class="cj" style="font-size:11px">序分量显示</span></div>
<div class="t" style="left:217px;top:735px;"><span class="cj" style="font-size:11px">续分量显示</span></div>
<div class="abs" style="left:942px;top:89px;width:1px;height:657px;background:#fff"></div>
<div class="abs" style="left:943px;top:89px;width:4px;height:657px;background:#bdd9fa"></div>
<div class="abs" style="left:947px;top:89px;width:330px;height:657px;background:#fff"></div>
<div class="abs" style="left:947px;top:88px;width:330px;height:20px;background:#b9cde5;border-top:1px solid #dfe8f2;border-left:1px solid #dfe8f2"></div>
<div class="sunk" style="left:947px;top:108px;width:328px;height:22px"></div>
<div class="btn" style="left:1257px;top:110px;width:17px;height:19px"></div>
<div class="arr" style="left:1261px;top:117px"></div>
<div class="t" style="left:951px;top:119px;"><span class="cj">矢量图</span></div>
<div class="abs" style="left:947px;top:130px;width:330px;height:25px;background:linear-gradient(#e3eefc 0,#d5e5fb 50%,#bcd5f6 100%)"></div>
<svg class="abs" style="left:952px;top:137px" width="16" height="15"><path d="M9 9 L13.5 13" stroke="#000" stroke-width="2.4"/><circle cx="6" cy="5.5" r="5" fill="#ffff00" stroke="#000" stroke-width="1.1"/><path d="M2.5 5.5 H9.5 M6 2 V9" stroke="#000" stroke-width="1"/></svg>
<svg class="abs" style="left:974px;top:137px" width="16" height="15"><path d="M9 9 L13.5 13" stroke="#000" stroke-width="2.4"/><circle cx="6" cy="5.5" r="5" fill="#ffff00" stroke="#000" stroke-width="1.1"/><path d="M2.5 5.5 H9.5" stroke="#000" stroke-width="1.4"/></svg>
<svg class="abs" style="left:996px;top:137px" width="16" height="15"><path d="M9 9 L13.5 13" stroke="#000" stroke-width="2.4"/><circle cx="6" cy="5.5" r="5" fill="#ffff00" stroke="#000" stroke-width="1.1"/><path d="M4 8.5 V3 L8 8 V2.5" stroke="#000" stroke-width="1.1" fill="none"/></svg>
<div class="abs" style="left:947px;top:155px;width:330px;height:250px;background:#000"></div>
<svg class="abs" style="left:947px;top:155px" width="330" height="250" viewBox="0 0 330 250"><circle cx="169.5" cy="125.5" r="106" fill="none" stroke="#fff" stroke-width="1"/><circle cx="169.5" cy="125.5" r="14" fill="none" stroke="#d8d8d8" stroke-width="1" stroke-dasharray="4 3"/><circle cx="169.5" cy="125.5" r="37" fill="none" stroke="#d8d8d8" stroke-width="1" stroke-dasharray="4 3"/><circle cx="169.5" cy="125.5" r="60" fill="none" stroke="#d8d8d8" stroke-width="1" stroke-dasharray="4 3"/><circle cx="169.5" cy="125.5" r="83" fill="none" stroke="#d8d8d8" stroke-width="1" stroke-dasharray="4 3"/><line x1="181.6" y1="118.5" x2="261.3" y2="72.5" stroke="#d8d8d8" stroke-dasharray="4 3"/><line x1="176.5" y1="113.4" x2="222.5" y2="33.7" stroke="#d8d8d8" stroke-dasharray="4 3"/><line x1="162.5" y1="113.4" x2="116.5" y2="33.7" stroke="#d8d8d8" stroke-dasharray="4 3"/><line x1="157.4" y1="118.5" x2="77.7" y2="72.5" stroke="#d8d8d8" stroke-dasharray="4 3"/><line x1="157.4" y1="132.5" x2="77.7" y2="178.5" stroke="#d8d8d8" stroke-dasharray="4 3"/><line x1="162.5" y1="137.6" x2="116.5" y2="217.3" stroke="#d8d8d8" stroke-dasharray="4 3"/><line x1="176.5" y1="137.6" x2="222.5" y2="217.3" stroke="#d8d8d8" stroke-dasharray="4 3"/><line x1="181.6" y1="132.5" x2="261.3" y2="178.5" stroke="#d8d8d8" stroke-dasharray="4 3"/><line x1="63.5" y1="125.5" x2="275.5" y2="125.5" stroke="#fff"/><line x1="169.5" y1="19.5" x2="169.5" y2="231.5" stroke="#fff"/><line x1="169.5" y1="125.5" x2="272.5" y2="125.5" stroke="#ffff00" stroke-width="1"/><line x1="272.5" y1="125.5" x2="266.4" y2="122.0" stroke="#ffff00" stroke-width="1.2"/><line x1="272.5" y1="125.5" x2="266.4" y2="129.0" stroke="#ffff00" stroke-width="1.2"/><line x1="219.5" y1="125.5" x2="213.4" y2="122.0" stroke="#ffff00" stroke-width="1.2"/><line x1="219.5" y1="125.5" x2="213.4" y2="129.0" stroke="#ffff00" stroke-width="1.2"/><line x1="169.5" y1="125.5" x2="119.0" y2="38.0" stroke="#ff0000" stroke-width="1"/><line x1="119.0" y1="38.0" x2="119.0" y2="45.0" stroke="#ff0000" stroke-width="1.2"/><line x1="119.0" y1="38.0" x2="125.1" y2="41.5" stroke="#ff0000" stroke-width="1.2"/><line x1="144.5" y1="82.2" x2="144.5" y2="89.2" stroke="#ff0000" stroke-width="1.2"/><line x1="144.5" y1="82.2" x2="150.6" y2="85.7" stroke="#ff0000" stroke-width="1.2"/><line x1="169.5" y1="125.5" x2="119.0" y2="213.0" stroke="#00e000" stroke-width="1"/><line x1="119.0" y1="213.0" x2="125.1" y2="209.5" stroke="#00e000" stroke-width="1.2"/><line x1="119.0" y1="213.0" x2="119.0" y2="206.0" stroke="#00e000" stroke-width="1.2"/><line x1="144.5" y1="168.8" x2="150.6" y2="165.3" stroke="#00e000" stroke-width="1.2"/><line x1="144.5" y1="168.8" x2="144.5" y2="161.8" stroke="#00e000" stroke-width="1.2"/><line x1="169.5" y1="125.5" x2="169.5" y2="118.5" stroke="#00e8f0" stroke-width="1.2"/><line x1="169.5" y1="125.5" x2="177.3" y2="121.0" stroke="#00e8f0" stroke-width="1.2"/><line x1="169.5" y1="125.5" x2="169.5" y2="132.5" stroke="#ff00ff" stroke-width="1.2"/><line x1="169.5" y1="125.5" x2="175.6" y2="129.0" stroke="#ff00ff" stroke-width="1.2"/><line x1="169.5" y1="125.5" x2="164.3" y2="122.5" stroke="#e0a000" stroke-width="1.2"/><line x1="169.5" y1="125.5" x2="164.3" y2="128.5" stroke="#e0a000" stroke-width="1.2"/><text x="169.5" y="16" text-anchor="middle" font-family="Liberation Sans" font-size="10" fill="#fff">+90</text><text x="169.5" y="242" text-anchor="middle" font-family="Liberation Sans" font-size="10" fill="#fff">-90</text><text x="37" y="129" font-family="Liberation Sans" font-size="10" fill="#fff">180</text><text x="278" y="129" font-family="Liberation Sans" font-size="10" fill="#fff">0</text></svg>
<div class="abs" style="left:947px;top:405px;width:330px;height:19px;background:#f0f0f0;border-bottom:1px solid #6d6d6d;border-top:1px solid #fff"></div>
<div class="abs" style="left:1046px;top:405px;width:1px;height:18px;background:#6d6d6d"></div>
<div class="abs" style="left:1047px;top:405px;width:1px;height:18px;background:#fff"></div>
<div class="abs" style="left:1266px;top:405px;width:1px;height:18px;background:#6d6d6d"></div>
<div class="abs" style="left:1267px;top:405px;width:1px;height:18px;background:#fff"></div>
<div class="abs" style="left:1276px;top:405px;width:1px;height:19px;background:#6d6d6d"></div>
<div class="t" style="left:953px;top:414px;"><span class="cj">名称</span></div>
<div class="t" style="left:1149px;top:414px;"><span class="cj">值</span></div>
<div class="abs" style="left:947px;top:426px;width:320px;height:16px;background:#f7f7f7;border-bottom:1px solid #ececec"></div>
<div class="abs" style="left:1267px;top:426px;width:10px;height:16px;border-bottom:1px solid #ececec"></div>
<div class="t" style="left:951px;top:435px;"><span class="cj">开出</span><span class="num" style="font-size:12px;margin-left:3px">1</span></div>
<div class="t" style="left:1150px;top:435px;"><span class="cj">分</span></div>
<div class="abs" style="left:947px;top:442px;width:320px;height:16px;background:#e9f6f6;border-bottom:1px solid #ececec"></div>
<div class="abs" style="left:1267px;top:442px;width:10px;height:16px;border-bottom:1px solid #ececec"></div>
<div class="t" style="left:951px;top:451px;"><span class="cj">开出</span><span class="num" style="font-size:12px;margin-left:3px">2</span></div>
<div class="t" style="left:1150px;top:451px;"><span class="cj">分</span></div>
<div class="abs" style="left:947px;top:458px;width:320px;height:16px;background:#f7f7f7;border-bottom:1px solid #ececec"></div>
<div class="abs" style="left:1267px;top:458px;width:10px;height:16px;border-bottom:1px solid #ececec"></div>
<div class="t" style="left:951px;top:467px;"><span class="cj">开出</span><span class="num" style="font-size:12px;margin-left:3px">3</span></div>
<div class="t" style="left:1150px;top:467px;"><span class="cj">分</span></div>
<div class="abs" style="left:947px;top:474px;width:320px;height:16px;background:#e9f6f6;border-bottom:1px solid #ececec"></div>
<div class="abs" style="left:1267px;top:474px;width:10px;height:16px;border-bottom:1px solid #ececec"></div>
<div class="t" style="left:951px;top:483px;"><span class="cj">开出</span><span class="num" style="font-size:12px;margin-left:3px">4</span></div>
<div class="t" style="left:1150px;top:483px;"><span class="cj">分</span></div>
<div class="abs" style="left:947px;top:490px;width:320px;height:16px;background:#f7f7f7;border-bottom:1px solid #ececec"></div>
<div class="abs" style="left:1267px;top:490px;width:10px;height:16px;border-bottom:1px solid #ececec"></div>
<div class="t" style="left:951px;top:499px;"><span class="cj">开出</span><span class="num" style="font-size:12px;margin-left:3px">5</span></div>
<div class="t" style="left:1150px;top:499px;"><span class="cj">分</span></div>
<div class="abs" style="left:947px;top:506px;width:320px;height:16px;background:#e9f6f6;border-bottom:1px solid #ececec"></div>
<div class="abs" style="left:1267px;top:506px;width:10px;height:16px;border-bottom:1px solid #ececec"></div>
<div class="t" style="left:951px;top:515px;"><span class="cj">开出</span><span class="num" style="font-size:12px;margin-left:3px">6</span></div>
<div class="t" style="left:1150px;top:515px;"><span class="cj">分</span></div>
<div class="abs" style="left:947px;top:522px;width:320px;height:16px;background:#f7f7f7;border-bottom:1px solid #ececec"></div>
<div class="abs" style="left:1267px;top:522px;width:10px;height:16px;border-bottom:1px solid #ececec"></div>
<div class="t" style="left:951px;top:531px;"><span class="cj">开出</span><span class="num" style="font-size:12px;margin-left:3px">7</span></div>
<div class="t" style="left:1150px;top:531px;"><span class="cj">分</span></div>
<div class="abs" style="left:947px;top:538px;width:320px;height:16px;background:#e9f6f6;border-bottom:1px solid #ececec"></div>
<div class="abs" style="left:1267px;top:538px;width:10px;height:16px;border-bottom:1px solid #ececec"></div>
<div class="t" style="left:951px;top:547px;"><span class="cj">开出</span><span class="num" style="font-size:12px;margin-left:3px">8</span></div>
<div class="t" style="left:1150px;top:547px;"><span class="cj">分</span></div>
<div class="abs" style="left:947px;top:554px;width:330px;height:16px;border-bottom:1px solid #ececec"></div>
<div class="abs" style="left:947px;top:570px;width:330px;height:16px;border-bottom:1px solid #ececec"></div>
<div class="abs" style="left:947px;top:586px;width:330px;height:16px;border-bottom:1px solid #ececec"></div>
<div class="abs" style="left:947px;top:602px;width:330px;height:16px;border-bottom:1px solid #ececec"></div>
<div class="abs" style="left:947px;top:618px;width:330px;height:16px;border-bottom:1px solid #ececec"></div>
<div class="abs" style="left:947px;top:634px;width:330px;height:16px;border-bottom:1px solid #ececec"></div>
<div class="abs" style="left:947px;top:650px;width:330px;height:16px;border-bottom:1px solid #ececec"></div>
<div class="abs" style="left:947px;top:666px;width:330px;height:16px;border-bottom:1px solid #ececec"></div>
<div class="abs" style="left:947px;top:682px;width:330px;height:16px;border-bottom:1px solid #ececec"></div>
<div class="abs" style="left:947px;top:698px;width:330px;height:16px;border-bottom:1px solid #ececec"></div>
<div class="abs" style="left:947px;top:714px;width:330px;height:16px;border-bottom:1px solid #ececec"></div>
<div class="abs" style="left:947px;top:730px;width:330px;height:16px;border-bottom:1px solid #ececec"></div>
<div class="abs" style="left:1047px;top:425px;width:1px;height:320px;background:#ececec"></div>
<div class="abs" style="left:1267px;top:425px;width:1px;height:320px;background:#ececec"></div>
<div class="abs" style="left:3px;top:746px;width:1274px;height:1px;background:#5a7db4"></div>
<div class="abs" style="left:3px;top:747px;width:1274px;height:18px;background:linear-gradient(#fff 0,#fff 1px,#d4e4f8 1px,#d0e2f8 4px,#c8dcf6 6.5px,#b2cff4 7px,#bcd6f2 10px,#c4daf4 16px,#d0e2f8 17px);border-radius:0 0 7px 7px"></div>
<div class="t" style="left:7px;top:756px;"><span class="cj" style="color:#15428b">就绪</span></div>
<div class="abs" style="left:211px;top:748px;width:1px;height:16px;background:#a9bfdc;box-shadow:1px 0 0 #fff"></div>
<div class="abs" style="left:291px;top:748px;width:1px;height:16px;background:#a9bfdc;box-shadow:1px 0 0 #fff"></div>
<div class="abs" style="left:388px;top:748px;width:1px;height:16px;background:#a9bfdc;box-shadow:1px 0 0 #fff"></div>
<div class="abs" style="left:513px;top:748px;width:1px;height:16px;background:#a9bfdc;box-shadow:1px 0 0 #fff"></div>
<div class="t" style="left:215px;top:756px;"><span class="cj" style="color:#15428b">运行时间</span></div>
<div class="t" style="left:296px;top:757px;"><span class="num" style="color:#15428b">0.000s</span></div>
<div class="t" style="left:392px;top:756px;"><span class="cj" style="color:#15428b">开入量状态</span></div>
<div class="t" style="left:516px;top:756px;"><span class="num" style="color:#000;font-size:11px">A</span></div>
<div class="abs" style="left:527px;top:751px;width:14px;height:14px;border:1px solid #6b6b6b;border-right-color:#f8f8f8;border-bottom-color:#f8f8f8"></div>
<div class="t" style="left:561px;top:756px;"><span class="num" style="color:#000;font-size:11px">B</span></div>
<div class="abs" style="left:572px;top:751px;width:14px;height:14px;border:1px solid #6b6b6b;border-right-color:#f8f8f8;border-bottom-color:#f8f8f8"></div>
<div class="t" style="left:606px;top:756px;"><span class="num" style="color:#000;font-size:11px">C</span></div>
<div class="abs" style="left:617px;top:751px;width:14px;height:14px;border:1px solid #6b6b6b;border-right-color:#f8f8f8;border-bottom-color:#f8f8f8"></div>
<div class="t" style="left:651px;top:756px;"><span class="num" style="color:#000;font-size:11px">R</span></div>
<div class="abs" style="left:662px;top:751px;width:14px;height:14px;border:1px solid #6b6b6b;border-right-color:#f8f8f8;border-bottom-color:#f8f8f8"></div>
<div class="t" style="left:696px;top:756px;"><span class="num" style="color:#000;font-size:11px">a</span></div>
<div class="abs" style="left:707px;top:751px;width:14px;height:14px;border:1px solid #6b6b6b;border-right-color:#f8f8f8;border-bottom-color:#f8f8f8"></div>
<div class="t" style="left:741px;top:756px;"><span class="num" style="color:#000;font-size:11px">b</span></div>
<div class="abs" style="left:752px;top:751px;width:14px;height:14px;border:1px solid #6b6b6b;border-right-color:#f8f8f8;border-bottom-color:#f8f8f8"></div>
<div class="t" style="left:786px;top:756px;"><span class="num" style="color:#000;font-size:11px">c</span></div>
<div class="abs" style="left:797px;top:751px;width:14px;height:14px;border:1px solid #6b6b6b;border-right-color:#f8f8f8;border-bottom-color:#f8f8f8"></div>
<div class="t" style="left:831px;top:756px;"><span class="num" style="color:#000;font-size:11px">r</span></div>
<div class="abs" style="left:842px;top:751px;width:14px;height:14px;border:1px solid #6b6b6b;border-right-color:#f8f8f8;border-bottom-color:#f8f8f8"></div>
<div class="t" style="left:876px;top:756px;"><span class="num" style="color:#000;font-size:11px">X</span></div>
<div class="abs" style="left:887px;top:751px;width:14px;height:14px;border:1px solid #6b6b6b;border-right-color:#f8f8f8;border-bottom-color:#f8f8f8"></div>
<div class="t" style="left:921px;top:756px;"><span class="num" style="color:#000;font-size:11px">x</span></div>
<div class="abs" style="left:932px;top:751px;width:14px;height:14px;border:1px solid #6b6b6b;border-right-color:#f8f8f8;border-bottom-color:#f8f8f8"></div>
</body></html>
